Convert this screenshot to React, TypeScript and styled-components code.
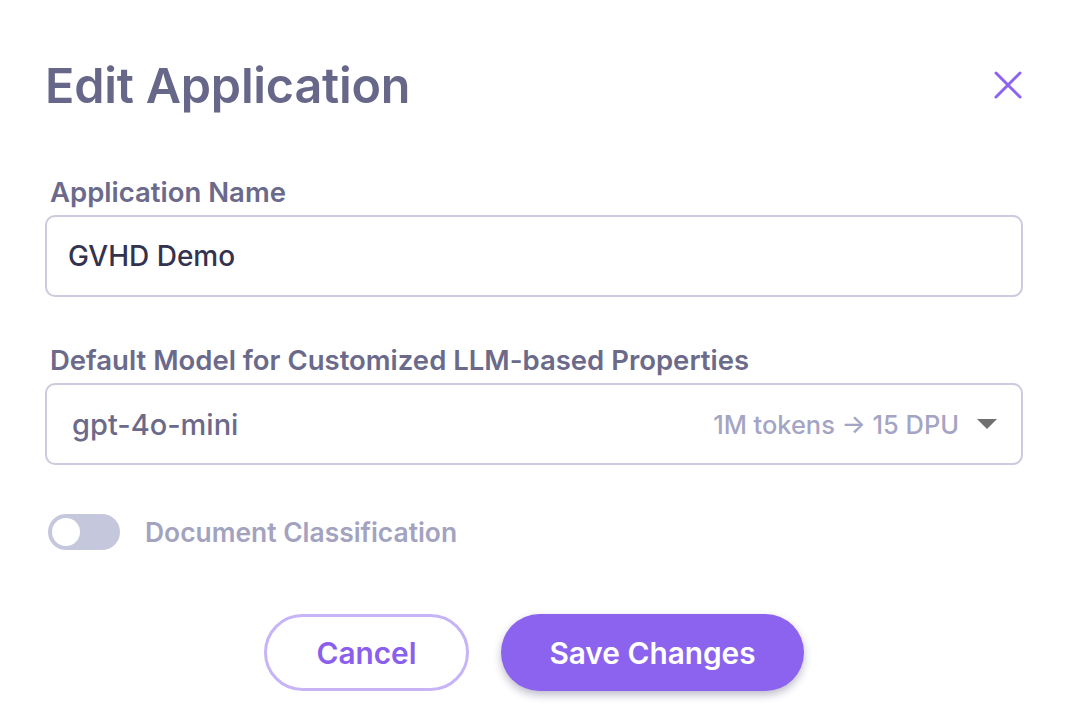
import React, { useState } from 'react';
import styled, { createGlobalStyle } from 'styled-components';

const GlobalStyle = createGlobalStyle`
  html, body {
    margin: 0;
    padding: 0;
    background: #ffffff;
  }
  * {
    box-sizing: border-box;
  }
  body {
    font-family: Inter, "Noto Sans", "Liberation Sans", sans-serif;
  }
`;

const Dialog = styled.div`
  width: 1068px;
  height: 728px;
  padding: 52px 45px 0 45px;
  display: flex;
  flex-direction: column;
`;

const Header = styled.div`
  display: flex;
  align-items: center;
  justify-content: space-between;
  height: 66px;
`;

const Title = styled.h1`
  margin: 0;
  font-size: 48.5px;
  font-weight: 600;
  color: #67678a;
  letter-spacing: -0.2px;
`;

const CloseButton = styled.button`
  width: 40px;
  height: 40px;
  border: none;
  background: none;
  padding: 0;
  margin-right: -5px;
  display: flex;
  align-items: center;
  justify-content: center;
  cursor: pointer;
`;

const Field = styled.div<{ $top: number }>`
  display: flex;
  flex-direction: column;
  gap: 6px;
  margin-top: ${p => p.$top}px;
`;

const Label = styled.label`
  font-size: 27.5px;
  font-weight: 600;
  color: #6b6a8b;
  padding-left: 5px;
  line-height: 34px;
`;

const Box = styled.div`
  height: 82px;
  border: 2px solid #cbcbde;
  border-radius: 10px;
  display: flex;
  align-items: center;
  padding: 0 24px 0 21px;
`;

const TextInput = styled.input`
  border: none;
  outline: none;
  width: 100%;
  padding: 0;
  background: transparent;
  font-family: inherit;
  font-size: 28px;
  font-weight: 500;
  color: #33334f;
`;

const SelectValue = styled.span`
  flex: 1;
  font-size: 29px;
  font-weight: 500;
  color: #6b6a8b;
  padding-left: 4px;
`;

const SelectMeta = styled.span`
  font-size: 25.4px;
  font-weight: 500;
  color: #a4a4c4;
  margin-right: 18px;
`;

const Caret = styled.span`
  width: 0;
  height: 0;
  border-left: 10px solid transparent;
  border-right: 10px solid transparent;
  border-top: 10px solid #707070;
`;

const ToggleRow = styled.div`
  display: flex;
  align-items: center;
  gap: 25px;
  margin-top: 49px;
  padding-left: 3px;
`;

const Track = styled.button<{ $on: boolean }>`
  width: 72px;
  height: 36px;
  border-radius: 18px;
  border: none;
  padding: 0;
  background: ${p => (p.$on ? '#8b63ee' : '#c5c7dc')};
  position: relative;
  cursor: pointer;
`;

const Knob = styled.span<{ $on: boolean }>`
  position: absolute;
  top: 4px;
  left: ${p => (p.$on ? '40px' : '4px')};
  width: 28px;
  height: 28px;
  border-radius: 50%;
  background: #ffffff;
`;

const ToggleLabel = styled.span`
  font-size: 26.4px;
  font-weight: 600;
  color: #a3a3c0;
`;

const Actions = styled.div`
  display: flex;
  justify-content: center;
  gap: 32px;
  margin-top: 64px;
`;

const Button = styled.button<{ $primary?: boolean }>`
  height: 77px;
  border-radius: 39px;
  font-family: inherit;
  font-size: 29.8px;
  font-weight: 600;
  cursor: pointer;
  border: ${p => (p.$primary ? 'none' : '3px solid #c6b4f6')};
  background: ${p => (p.$primary ? '#8b63ee' : '#ffffff')};
  color: ${p => (p.$primary ? '#ffffff' : '#8a5fee')};
  box-shadow: ${p => (p.$primary ? '0 4px 8px rgba(40, 30, 80, 0.3)' : 'none')};
  width: ${p => (p.$primary ? '303px' : '205px')};
`;

export default function App() {
  const [name, setName] = useState('GVHD Demo');
  const [docClass, setDocClass] = useState(false);

  return (
    <>
      <GlobalStyle />
      <Dialog>
        <Header>
          <Title>Edit Application</Title>
          <CloseButton aria-label="Close">
            <svg width="30" height="30" viewBox="0 0 30 30" fill="none">
              <path d="M3 3L27 27M27 3L3 27" stroke="#8b63ee" strokeWidth="3" strokeLinecap="round" />
            </svg>
          </CloseButton>
        </Header>

        <Field $top={57}>
          <Label>Application Name</Label>
          <Box>
            <TextInput value={name} onChange={e => setName(e.target.value)} />
          </Box>
        </Field>

        <Field $top={46}>
          <Label>Default Model for Customized LLM-based Properties</Label>
          <Box>
            <SelectValue>gpt-4o-mini</SelectValue>
            <SelectMeta>1M tokens → 15 DPU</SelectMeta>
            <Caret />
          </Box>
        </Field>

        <ToggleRow>
          <Track $on={docClass} onClick={() => setDocClass(!docClass)}>
            <Knob $on={docClass} />
          </Track>
          <ToggleLabel>Document Classification</ToggleLabel>
        </ToggleRow>

        <Actions>
          <Button>Cancel</Button>
          <Button $primary>Save Changes</Button>
        </Actions>
      </Dialog>
    </>
  );
}
